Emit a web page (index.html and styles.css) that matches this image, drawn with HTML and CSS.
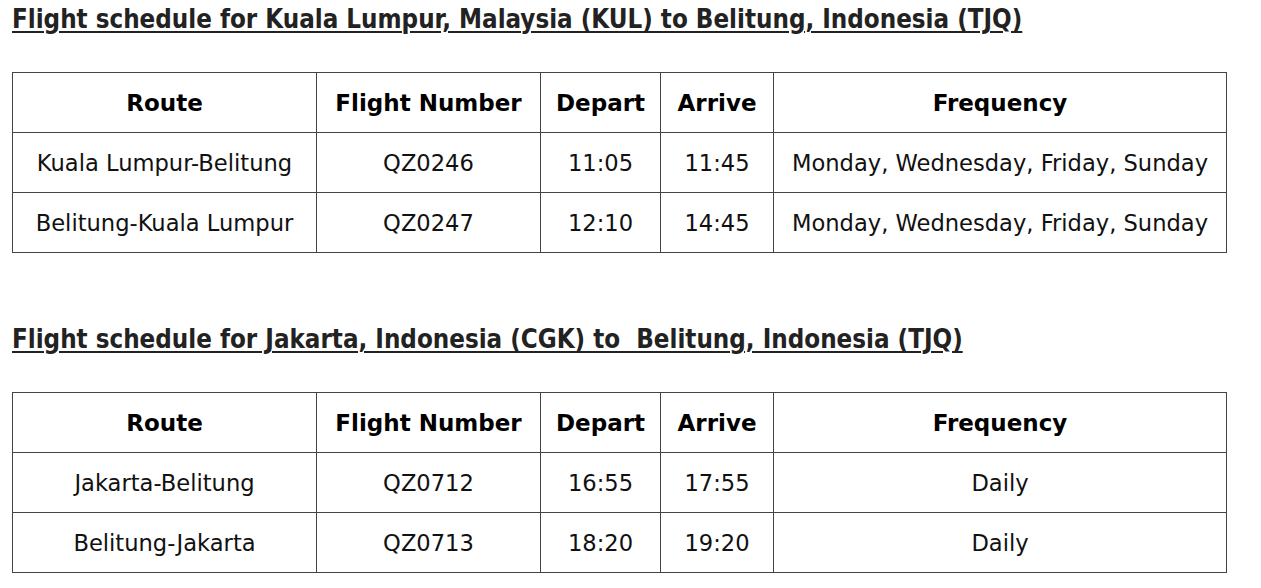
FILE: index.html
```html
<!DOCTYPE html>
<html lang="en">
<head>
<meta charset="utf-8">
<title>Flight schedule</title>
<link rel="stylesheet" href="styles.css">
</head>
<body>
<main class="page">
  <section class="schedule">
    <h2 class="schedule-title">Flight schedule for Kuala Lumpur, Malaysia (KUL) to Belitung, Indonesia (TJQ)</h2>
    <table class="flights">
      <colgroup>
        <col class="c-route"><col class="c-num"><col class="c-dep"><col class="c-arr"><col class="c-freq">
      </colgroup>
      <thead>
        <tr><th>Route</th><th>Flight Number</th><th>Depart</th><th>Arrive</th><th>Frequency</th></tr>
      </thead>
      <tbody>
        <tr><td>Kuala Lumpur-Belitung</td><td>QZ0246</td><td>11:05</td><td>11:45</td><td>Monday, Wednesday, Friday, Sunday</td></tr>
        <tr><td>Belitung-Kuala Lumpur</td><td>QZ0247</td><td>12:10</td><td>14:45</td><td>Monday, Wednesday, Friday, Sunday</td></tr>
      </tbody>
    </table>
  </section>
  <section class="schedule second">
    <h2 class="schedule-title">Flight schedule for Jakarta, Indonesia (CGK) to&nbsp; Belitung, Indonesia (TJQ)</h2>
    <table class="flights">
      <colgroup>
        <col class="c-route"><col class="c-num"><col class="c-dep"><col class="c-arr"><col class="c-freq">
      </colgroup>
      <thead>
        <tr><th>Route</th><th>Flight Number</th><th>Depart</th><th>Arrive</th><th>Frequency</th></tr>
      </thead>
      <tbody>
        <tr><td>Jakarta-Belitung</td><td>QZ0712</td><td>16:55</td><td>17:55</td><td>Daily</td></tr>
        <tr><td>Belitung-Jakarta</td><td>QZ0713</td><td>18:20</td><td>19:20</td><td>Daily</td></tr>
      </tbody>
    </table>
  </section>
</main>
</body>
</html>
```
FILE: styles.css
```css
html, body {
  margin: 0;
  padding: 0;
  background: #ffffff;
}
body {
  font-family: "DejaVu Sans", Verdana, sans-serif;
  color: #111111;
}
.page {
  padding: 4px 0 0 12px;
}
.schedule-title {
  margin: 0;
  font-size: 25.7px;
  font-stretch: condensed;
  line-height: 30px;
  font-weight: bold;
  color: #222222;
  text-decoration: underline;
  text-decoration-thickness: 2px;
  text-underline-offset: 3px;
  white-space: nowrap;
}
.flights {
  margin-top: 38px;
  width: 1214px;
  border-collapse: collapse;
  table-layout: fixed;
  font-size: 22.6px;
}
.second {
  margin-top: 71px;
}
.c-route { width: 304px; }
.c-num { width: 224px; }
.c-dep { width: 120px; }
.c-arr { width: 113px; }
.c-freq { width: 453px; }
.flights th,
.flights td {
  border: 1px solid #444444;
  height: 59px;
  padding: 0;
  text-align: center;
  vertical-align: middle;
  white-space: nowrap;
}
.flights th {
  font-weight: bold;
  font-size: 23px;
  color: #000000;
}
.flights td {
  font-weight: normal;
  color: #111111;
}
```
